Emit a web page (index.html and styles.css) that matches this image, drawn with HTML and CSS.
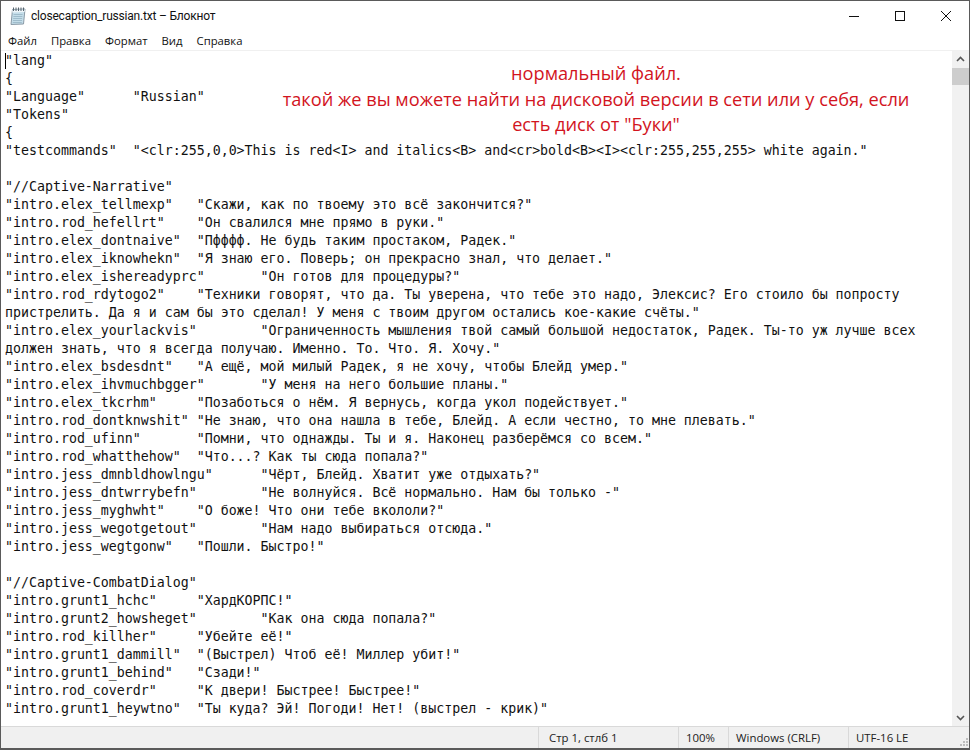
FILE: index.html
```html
<!DOCTYPE html>
<html lang="ru">
<head>
<meta charset="utf-8">
<title>closecaption_russian.txt – Блокнот</title>
<link rel="stylesheet" href="styles.css">
</head>
<body>
<div class="window">
  <header class="titlebar">
    <svg class="app-icon" width="16" height="18" viewBox="0 0 16 18">
      <path d="M2.5 2.5 15 2 13.5 17 1 17.5Z" fill="#c4dde9" stroke="#8a9aa6" stroke-width="1"/>
      <path d="M2.4 3 14.8 2.5 14.6 5 2.2 5.4Z" fill="#eef5f9"/>
      <path d="M3.5 .5v3.5M6 .5v3.5M8.5 .5v3.5M11 .5v3.5M13.5 .5v3.5" stroke="#55636d" stroke-width="1"/>
      <path d="M3.6 7.5h9M3.4 9.5h9M3.2 11.5h9M3 13.5h9M2.8 15.5h9" stroke="#9fbccb" stroke-width="1"/>
    </svg>
    <span class="title">closecaption_russian.txt – Блокнот</span>
    <div class="controls">
      <svg width="46" height="30" viewBox="0 0 46 30"><path d="M18 15.5h10" stroke="#111" stroke-width="1"/></svg>
      <svg width="46" height="30" viewBox="0 0 46 30"><rect x="18.5" y="10.5" width="9" height="9" fill="none" stroke="#111" stroke-width="1"/></svg>
      <svg width="46" height="30" viewBox="0 0 46 30"><path d="M18 10l10 10M28 10 18 20" stroke="#111" stroke-width="1"/></svg>
    </div>
  </header>
  <nav class="menu">
    <span>Файл</span><span>Правка</span><span>Формат</span><span>Вид</span><span>Справка</span>
  </nav>
  <main class="body">
    <div class="editor">
      <span class="caret"></span>
<pre class="text">"lang"
{
"Language"	"Russian"
"Tokens"
{
"testcommands"	"&lt;clr:255,0,0&gt;This is red&lt;I&gt; and italics&lt;B&gt; and&lt;cr&gt;bold&lt;B&gt;&lt;I&gt;&lt;clr:255,255,255&gt; white again."

"//Captive-Narrative"
"intro.elex_tellmexp"	"Скажи, как по твоему это всё закончится?"
"intro.rod_hefellrt"	"Он свалился мне прямо в руки."
"intro.elex_dontnaive"	"Пфффф. Не будь таким простаком, Радек."
"intro.elex_iknowhekn"	"Я знаю его. Поверь; он прекрасно знал, что делает."
"intro.elex_ishereadyprc"	"Он готов для процедуры?"
"intro.rod_rdytogo2"	"Техники говорят, что да. Ты уверена, что тебе это надо, Элексис? Его стоило бы попросту пристрелить. Да я и сам бы это сделал! У меня с твоим другом остались кое-какие счёты."
"intro.elex_yourlackvis"	"Ограниченность мышления твой самый большой недостаток, Радек. Ты-то уж лучше всех должен знать, что я всегда получаю. Именно. То. Что. Я. Хочу."
"intro.elex_bsdesdnt"	"А ещё, мой милый Радек, я не хочу, чтобы Блейд умер."
"intro.elex_ihvmuchbgger"	"У меня на него большие планы."
"intro.elex_tkcrhm"	"Позаботься о нём. Я вернусь, когда укол подействует."
"intro.rod_dontknwshit"	"Не знаю, что она нашла в тебе, Блейд. А если честно, то мне плевать."
"intro.rod_ufinn"	"Помни, что однажды. Ты и я. Наконец разберёмся со всем."
"intro.rod_whatthehow"	"Что...? Как ты сюда попала?"
"intro.jess_dmnbldhowlngu"	"Чёрт, Блейд. Хватит уже отдыхать?"
"intro.jess_dntwrrybefn"	"Не волнуйся. Всё нормально. Нам бы только -"
"intro.jess_myghwht"	"О боже! Что они тебе вкололи?"
"intro.jess_wegotgetout"	"Нам надо выбираться отсюда."
"intro.jess_wegtgonw"	"Пошли. Быстро!"

"//Captive-CombatDialog"
"intro.grunt1_hchc"	"ХардКОРПС!"
"intro.grunt2_howsheget"	"Как она сюда попала?"
"intro.rod_killher"	"Убейте её!"
"intro.grunt1_dammill"	"(Выстрел) Чтоб её! Миллер убит!"
"intro.grunt1_behind"	"Сзади!"
"intro.rod_coverdr"	"К двери! Быстрее! Быстрее!"
"intro.grunt1_heywtno"	"Ты куда? Эй! Погоди! Нет! (выстрел - крик)"</pre>
      <div class="note">
        <p>нормальный файл.</p>
        <p>такой же вы можете найти на дисковой версии в сети или у себя, если</p>
        <p>есть диск от "Буки"</p>
      </div>
    </div>
    <div class="scrollbar">
      <svg class="arrow" width="17" height="17" viewBox="0 0 17 17"><path d="M5 10l3.5-3.5L12 10" fill="none" stroke="#555" stroke-width="1.6"/></svg>
      <div class="track"><div class="thumb"></div></div>
      <svg class="arrow" width="17" height="17" viewBox="0 0 17 17"><path d="M5 7l3.5 3.5L12 7" fill="none" stroke="#555" stroke-width="1.6"/></svg>
    </div>
  </main>
  <footer class="status">
    <span class="cell pos">Стр 1, стлб 1</span>
    <span class="cell zoom">100%</span>
    <span class="cell eol">Windows (CRLF)</span>
    <span class="cell enc">UTF-16 LE</span>
    <svg class="grip" width="12" height="12" viewBox="0 0 12 12"><path d="M9 2h2v2H9zM6 5h2v2H6zM9 5h2v2H9zM3 8h2v2H3zM6 8h2v2H6zM9 8h2v2H9z" fill="#bdbdbd"/></svg>
  </footer>
</div>
</body>
</html>
```
FILE: styles.css
```css
* { box-sizing: border-box; }
html, body { margin: 0; height: 100%; overflow: hidden; background: #fff; }
.window {
  width: 970px; height: 750px;
  display: flex; flex-direction: column;
  border: 1px solid #5a5a5a;
  border-width: 1px 1px 2px 1px;
  background: #fff;
  font-family: "Open Sans", "Noto Sans", sans-serif;
  color: #111;
}
.titlebar { display: flex; align-items: center; height: 30px; flex: none; padding-left: 9px; }
.app-icon { flex: none; margin-right: 5px; }
.title { font-family: Roboto, "Open Sans", sans-serif; font-size: 12px; letter-spacing: -0.2px; flex: 1; }
.controls { display: flex; }
.controls svg { display: block; }
.menu { height: 19px; flex: none; display: flex; gap: 14px; padding-left: 7px; align-items: center; font-size: 11.3px; }
.body { flex: 1; min-height: 0; display: flex; border-top: 1px solid #f0f0f0; margin-top: 0; }
.editor { flex: 1; min-width: 0; position: relative; overflow: hidden; padding: 1px 0 0 4px; }
.caret { position: absolute; left: 4px; top: 2px; width: 1px; height: 16px; background: #000; }
.text {
  margin: 0;
  font-family: "DejaVu Sans Mono", "Liberation Mono", monospace;
  font-size: 13.28px; line-height: 18px;
  white-space: pre-wrap; word-break: normal;
  tab-size: 8;
  color: #111;
}
.note { position: absolute; left: 239px; top: 10px; width: 712px; display: flex; flex-direction: column; align-items: center; color: #d2141e; font-size: 18.2px; line-height: 25.5px; }
.note p { margin: 0; }
.scrollbar { width: 17px; flex: none; display: flex; flex-direction: column; background: #f1f1f1; }
.arrow { display: block; flex: none; }
.track { flex: 1; }
.thumb { height: 17px; background: #cdcdcd; }
.status { height: 22px; flex: none; display: flex; position: relative; border-top: 1px solid #d9d9d9; background: #f0f0f0; font-size: 11.4px; color: #222; align-items: stretch; }
.cell { display: flex; align-items: center; padding-left: 10px; border-left: 1px solid #d9d9d9; }
.pos { margin-left: 537px; width: 140px; }
.zoom { width: 50px; padding-left: 7px; }
.eol { width: 120px; padding-left: 7px; }
.enc { flex: 1; padding-left: 7px; }
.grip { position: absolute; right: 0; bottom: 0; }
```
